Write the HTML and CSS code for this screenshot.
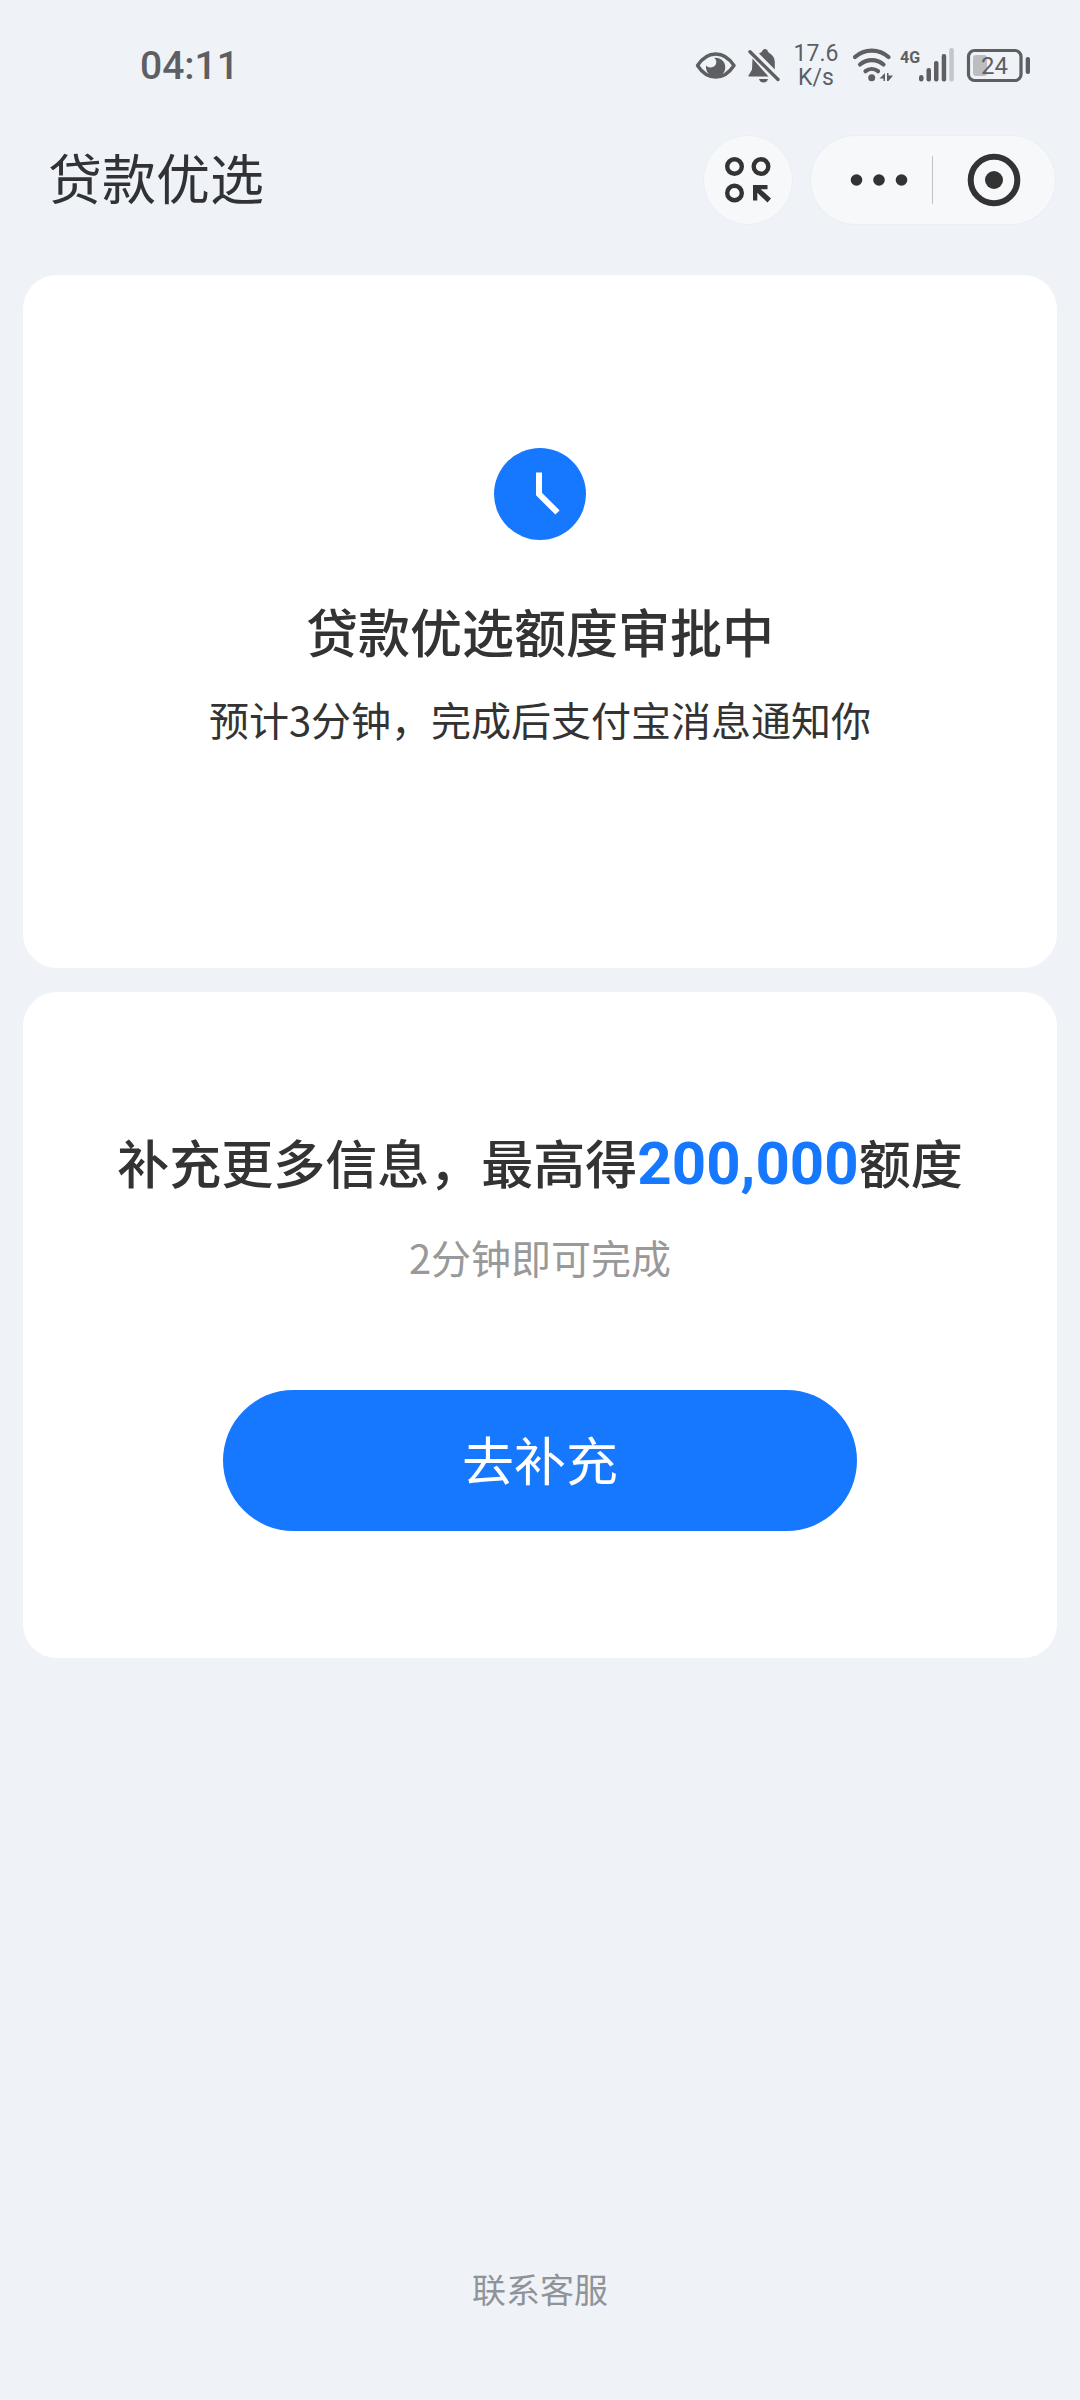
FILE: index.html
```html
<!DOCTYPE html>
<html lang="zh-CN">
<head>
<meta charset="utf-8">
<meta name="viewport" content="width=device-width, initial-scale=1">
<title>贷款优选</title>
<link rel="stylesheet" href="styles.css">
</head>
<body>
<div class="page">
  <div class="status-bar">
    <time class="status-time">04:11</time>
    <div class="status-icons">
      <svg width="42" height="36" viewBox="0 0 42 36" aria-hidden="true">
        <path d="M3.500 17.500Q11 6 21.700 6T40 17.500Q32.500 29 21.700 29T3.500 17.500Z" fill="none" stroke="currentColor" stroke-width="3.400" stroke-linejoin="round"/>
        <path d="M20 9.800A9.600 9.600 0 1 1 12.200 17.600Q14 20 17 19.500Q22.500 18.500 22.300 13.500Q22 11 20 9.800Z" fill="currentColor"/>
      </svg>
      <svg width="32" height="36" viewBox="0 0 32 36" aria-hidden="true">
        <path d="M4.500 10.500L20.500 28.500H1Q-.5 28 1.500 26L4 21.500ZM11 5.500Q14.500 4 14.800 2Q17 0 19.300 2Q19.500 4 22 5.500Q26.800 8.500 26.800 14V21.500ZM11 31H20Q19 34.500 15.500 34.500T11 31Z" fill="currentColor"/>
        <path d="M2 3.800L30 31.500" stroke="currentColor" stroke-width="3.400" stroke-linecap="round"/>
      </svg>
      <div class="net-speed"><span>17.6</span><span>K/s</span></div>
      <div class="network">
        <svg width="41" height="36" viewBox="0 0 41 36" aria-hidden="true">
          <g fill="none" stroke="currentColor" stroke-width="4.200" stroke-linecap="round">
            <path d="M3 9A25 25 0 0 1 36.500 9"/>
            <path d="M8 16.500A18 18 0 0 1 31.500 16.500"/>
            <path d="M13.500 23.200A10 10 0 0 1 26 23.200"/>
          </g>
          <circle cx="19.700" cy="29.800" r="3.500" fill="currentColor"/>
          <path d="M33 25V33H31.500V30.500H27.500ZM35 25H36.500V27.500H41L36.500 33H35Z" fill="currentColor"/>
        </svg>
        <svg class="signal" width="54" height="36" viewBox="0 0 54 36" aria-hidden="true">
          <text class="signal-type" x="0" y="15">4G</text>
          <g fill="currentColor">
            <rect x="19" y="27" width="4.500" height="6.500" rx="2.200"/>
            <rect x="26.500" y="20" width="4.500" height="13.500" rx="2"/>
            <rect x="34" y="13" width="4.500" height="20.500" rx="2"/>
            <rect x="41.700" y="6" width="4.500" height="27.500" rx="2"/>
            <rect x="49.300" y="0" width="4.500" height="33.500" rx="2" opacity=".3"/>
          </g>
        </svg>
      </div>
      <svg width="64" height="36" viewBox="0 0 64 36" aria-hidden="true">
        <rect x="2.500" y="2.500" width="52.500" height="30" rx="6" fill="none" stroke="currentColor" stroke-width="3.200"/>
        <rect x="7" y="7" width="14" height="21" rx="3" fill="#bcbdc0"/>
        <rect x="59.700" y="9" width="4.300" height="17" rx="2" fill="currentColor"/>
        <text class="battery-level" x="28.500" y="26">24</text>
      </svg>
    </div>
  </div>

  <header class="nav-bar">
    <h1 class="nav-title">贷款优选</h1>
    <div class="nav-actions">
      <button class="apps-button" type="button" aria-label="小程序">
        <svg width="48" height="48" viewBox="0 0 48 48" aria-hidden="true">
          <g fill="none" stroke="currentColor" stroke-width="4.400">
            <circle cx="10.500" cy="10.500" r="7.300"/>
            <circle cx="37" cy="10.500" r="7.300"/>
            <circle cx="10.500" cy="37" r="7.300"/>
          </g>
          <path d="M29 29H43.500V33.200H36.700L47 42.500L43.500 46.500L33.300 36.700V44.500H29Z" fill="currentColor"/>
        </svg>
      </button>
      <div class="capsule">
        <button class="capsule-button capsule-more" type="button" aria-label="更多">
          <svg width="58" height="12" viewBox="0 0 58 12" fill="currentColor" aria-hidden="true">
            <circle cx="6.500" cy="6" r="5.800"/><circle cx="29" cy="6" r="5.800"/><circle cx="51.500" cy="6" r="5.800"/>
          </svg>
        </button>
        <button class="capsule-button" type="button" aria-label="关闭">
          <svg width="54" height="54" viewBox="0 0 54 54" aria-hidden="true">
            <circle cx="27" cy="27" r="23.300" fill="none" stroke="currentColor" stroke-width="6"/>
            <circle cx="27" cy="27" r="9" fill="currentColor"/>
          </svg>
        </button>
      </div>
    </div>
  </header>

  <main class="cards">
    <section class="card card-status">
      <svg class="clock" width="92" height="92" viewBox="0 0 92 92" aria-hidden="true">
        <circle cx="46" cy="46" r="46" fill="#1677ff"/>
        <path d="M45 24.500V46L63.500 64.500" fill="none" stroke="#fff" stroke-width="6"/>
      </svg>
      <h2 class="card-title">贷款优选额度审批中</h2>
      <p class="card-text">预计3分钟，完成后支付宝消息通知你</p>
    </section>
    <section class="card card-more">
      <h2 class="card-title">补充更多信息，最高得<strong class="amount">200,000</strong>额度</h2>
      <p class="card-text card-hint">2分钟即可完成</p>
      <button class="primary-button" type="button">去补充</button>
    </section>
  </main>

  <footer class="footer"><a class="service-link" href="#service">联系客服</a></footer>
</div>
</body>
</html>
```
FILE: styles.css
```css
* {
  box-sizing: border-box;
}

body {
  margin: 0;
  background: #eff3f8;
  color: #333;
  font-family: "Noto Sans CJK SC", sans-serif;
}

h1, h2, p {
  margin: 0;
}

button {
  padding: 0;
  border: 0;
  background: none;
  color: inherit;
  font: inherit;
  cursor: pointer;
}

svg {
  display: block;
  flex: none;
}

.page {
  display: flex;
  flex-direction: column;
  min-height: 100vh;
}

.status-bar {
  display: flex;
  align-items: center;
  justify-content: space-between;
  height: 132px;
  padding: 0 50px 0 140px;
  color: #5d5f63;
  font-family: Roboto, sans-serif;
}

.status-time {
  font-size: 39px;
  font-weight: 500;
}

.status-icons {
  display: flex;
  align-items: center;
  gap: 12px;
}

.net-speed {
  display: flex;
  flex-direction: column;
  align-items: center;
  width: 48px;
  font-size: 23px;
  line-height: 24px;
}

.network {
  display: flex;
  gap: 7px;
}

.signal {
  overflow: visible;
}

.signal-type {
  fill: currentColor;
  font-size: 16px;
  font-weight: 700;
}

.battery-level {
  fill: currentColor;
  font-size: 24px;
  text-anchor: middle;
}

.nav-bar {
  display: flex;
  align-items: center;
  justify-content: space-between;
  height: 96px;
  padding: 0 25px 0 48px;
}

.nav-title {
  padding-bottom: 6px;
  color: #303236;
  font-size: 54px;
  font-weight: 400;
  line-height: 80px;
}

.nav-actions {
  display: flex;
  gap: 19px;
}

.apps-button,
.capsule {
  height: 88px;
  border-radius: 44px;
  background: #f7f8fa;
  box-shadow: 0 0 0 1px #ebeef4;
}

.apps-button {
  display: grid;
  place-items: center;
  width: 88px;
}

.capsule {
  display: flex;
  align-items: center;
}

.capsule-button {
  display: flex;
  align-items: center;
  justify-content: center;
  width: 122px;
  height: 48px;
}

.capsule-more {
  padding-left: 14px;
  border-right: 1px solid #c0c2c5;
}

.cards {
  display: flex;
  flex-direction: column;
  gap: 24px;
  padding: 47px 23px;
}

.card {
  display: flex;
  flex-direction: column;
  align-items: center;
  border-radius: 34px;
  background: #fff;
  text-align: center;
}

.card-status {
  padding: 173px 24px 221px;
}

.card-more {
  padding: 134px 24px 127px;
}

.clock {
  margin-bottom: 55px;
}

.card-title {
  font-size: 52px;
  font-weight: 500;
  line-height: 72px;
}

.card-text {
  margin-top: 24px;
  font-size: 40px;
  line-height: 56px;
}

.card-hint {
  margin-top: 31px;
  color: #999;
}

.amount {
  color: #1677ff;
  font-family: Roboto, sans-serif;
  font-size: 60px;
  font-weight: 700;
  line-height: 60px;
}

.primary-button {
  width: 634px;
  max-width: 100%;
  height: 141px;
  margin-top: 105px;
  padding-bottom: 4px;
  border-radius: 71px;
  background: #1677ff;
  color: #fff;
  font-size: 52px;
}

.footer {
  margin-top: auto;
  padding-bottom: 87px;
  text-align: center;
}

.service-link {
  display: inline-block;
  color: #909399;
  font-size: 34px;
  line-height: 48px;
  text-decoration: none;
}
```
